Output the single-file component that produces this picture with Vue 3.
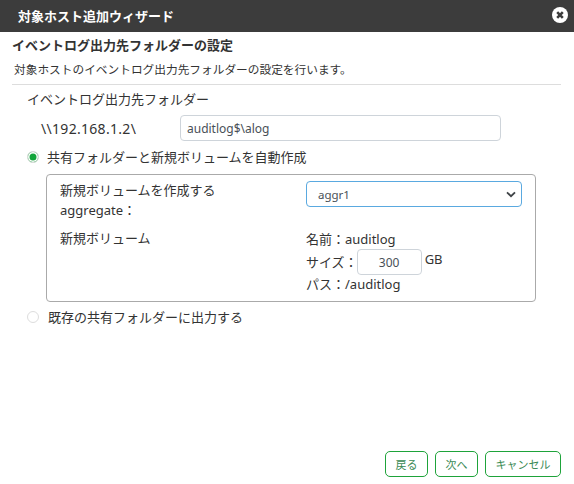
<script setup>
const sizeValue = '300'
const folderValue = 'auditlog$\\alog'
</script>

<template>
  <div class="dialog">
    <header class="titlebar">
      <span class="title">対象ホスト追加ウィザード</span>
      <svg class="close" viewBox="0 0 16 16" width="16" height="16">
        <circle cx="8" cy="8" r="8" fill="#fff" />
        <path d="M5.2 5.2 10.8 10.8M10.8 5.2 5.2 10.8" stroke="#3c3c3c" stroke-width="2.6" stroke-linecap="butt" />
      </svg>
    </header>
    <main class="body">
      <h1 class="heading">イベントログ出力先フォルダーの設定</h1>
      <p class="desc">対象ホストのイベントログ出力先フォルダーの設定を行います。</p>
      <div class="section">
        <div class="label">イベントログ出力先フォルダー</div>
        <div class="path-row">
          <span class="prefix">\\192.168.1.2\</span>
          <input class="text path-input" :value="folderValue" />
        </div>
        <div class="radio-row first">
          <span class="radio on"></span>
          <span>共有フォルダーと新規ボリュームを自動作成</span>
        </div>
        <div class="box">
          <div class="box-left">
            <div class="l1">新規ボリュームを作成する<br />aggregate：</div>
            <div class="l2">新規ボリューム</div>
          </div>
          <div class="box-right">
            <div class="select">
              <span>aggr1</span>
              <svg viewBox="0 0 12 8" width="10" height="7"><path d="M1.2 1.4 6 6 10.8 1.4" fill="none" stroke="#3f4347" stroke-width="2.2" /></svg>
            </div>
            <div class="info name">名前：auditlog</div>
            <div class="size-row">
              <span>サイズ：</span>
              <input class="text size-input" :value="sizeValue" />
              <span class="unit">GB</span>
            </div>
            <div class="info last">パス：/auditlog</div>
          </div>
        </div>
        <div class="radio-row second">
          <span class="radio"></span>
          <span>既存の共有フォルダーに出力する</span>
        </div>
      </div>
    </main>
    <footer class="footer">
      <button class="btn">戻る</button>
      <button class="btn">次へ</button>
      <button class="btn wide">キャンセル</button>
    </footer>
  </div>
</template>

<style>
html, body { margin: 0; background: #fff; }
</style>

<style scoped>
.dialog {
  width: 574px;
  height: 484px;
  display: flex;
  flex-direction: column;
  font-family: "Noto Sans", "Noto Sans CJK JP", sans-serif;
  font-size: 13px;
  color: #333;
  background: #fff;
  overflow: hidden;
}
.titlebar {
  height: 32px;
  background: #3c3c3c;
  display: flex;
  align-items: center;
  justify-content: space-between;
  padding: 0 6px 2px 18px;
  box-sizing: border-box;
  flex: none;
}
.title { color: #fff; font-weight: 700; font-size: 13px; }
.close { display: block; }
.body { flex: 1; padding: 4px 13px 0 12px; }
.heading { margin: 0; font-size: 13px; font-weight: 700; line-height: 18px; color: #333; }
.desc {
  margin: 5px 0 0;
  padding: 0 0 5px 2px;
  font-size: 11.7px;
  line-height: 20px;
  border-bottom: 1px solid #ddd;
}
.section { padding: 4px 0 0 15px; }
.label { line-height: 20px; }
.path-row { display: flex; align-items: center; margin-top: 6px; }
.prefix { width: 153px; padding-left: 14px; box-sizing: border-box; font-size: 14px; letter-spacing: 0.3px; }
.text {
  box-sizing: border-box;
  border: 1px solid #ced4da;
  border-radius: 4px;
  font: inherit;
  font-size: 12px;
  color: #495057;
  outline: none;
  background: #fff;
}
.path-input { width: 321px; height: 26px; padding: 0 6px; }
.radio-row { display: flex; align-items: center; gap: 8px; line-height: 20px; }
.radio-row.first { margin-top: 6px; }
.radio-row.second { margin-top: 5px; gap: 9px; }
.radio {
  width: 12px;
  height: 12px;
  border-radius: 50%;
  border: 1px solid #ddd;
  box-sizing: border-box;
  background: #fff;
  flex: none;
}
.radio.on { background: #12a53a; box-shadow: inset 0 0 0 1.5px #fff; }
.box {
  margin: 7px 25px 0 19px;
  height: 128px;
  box-sizing: border-box;
  border: 1px solid #aaa;
  border-radius: 4px;
  display: flex;
  padding: 5px 13px 0 13px;
}
.box-left { width: 246px; flex: none; }
.l1 { line-height: 20px; }
.l2 { margin-top: 8px; line-height: 20px; }
.box-right { flex: 1; padding-top: 1px; }
.select {
  height: 26px;
  box-sizing: border-box;
  border: 1px solid #5aa9e0;
  border-radius: 4px;
  display: flex;
  align-items: center;
  justify-content: space-between;
  padding: 0 5px 0 11px;
  font-size: 11.5px;
  color: #495057;
}
.info { line-height: 20px; }
.info.name { margin-top: 22px; }
.info.last { margin-top: -1px; }
.size-row { display: flex; align-items: center; line-height: 20px; height: 26px; margin-top: 0; }
.size-input { width: 65px; height: 26px; text-align: center; margin-left: -1px; }
.unit { margin-left: 3px; margin-bottom: 6px; font-size: 13px; }
.footer {
  display: flex;
  justify-content: flex-end;
  gap: 7px;
  padding: 0 13px 7px 0;
}
.btn {
  font: inherit;
  font-size: 11px;
  color: #3a8a55;
  background: #fff;
  border: 1px solid #1ea33a;
  border-radius: 5px;
  height: 26px;
  width: 43px;
  padding: 0;
}
.btn.wide { width: 76px; }
</style>
